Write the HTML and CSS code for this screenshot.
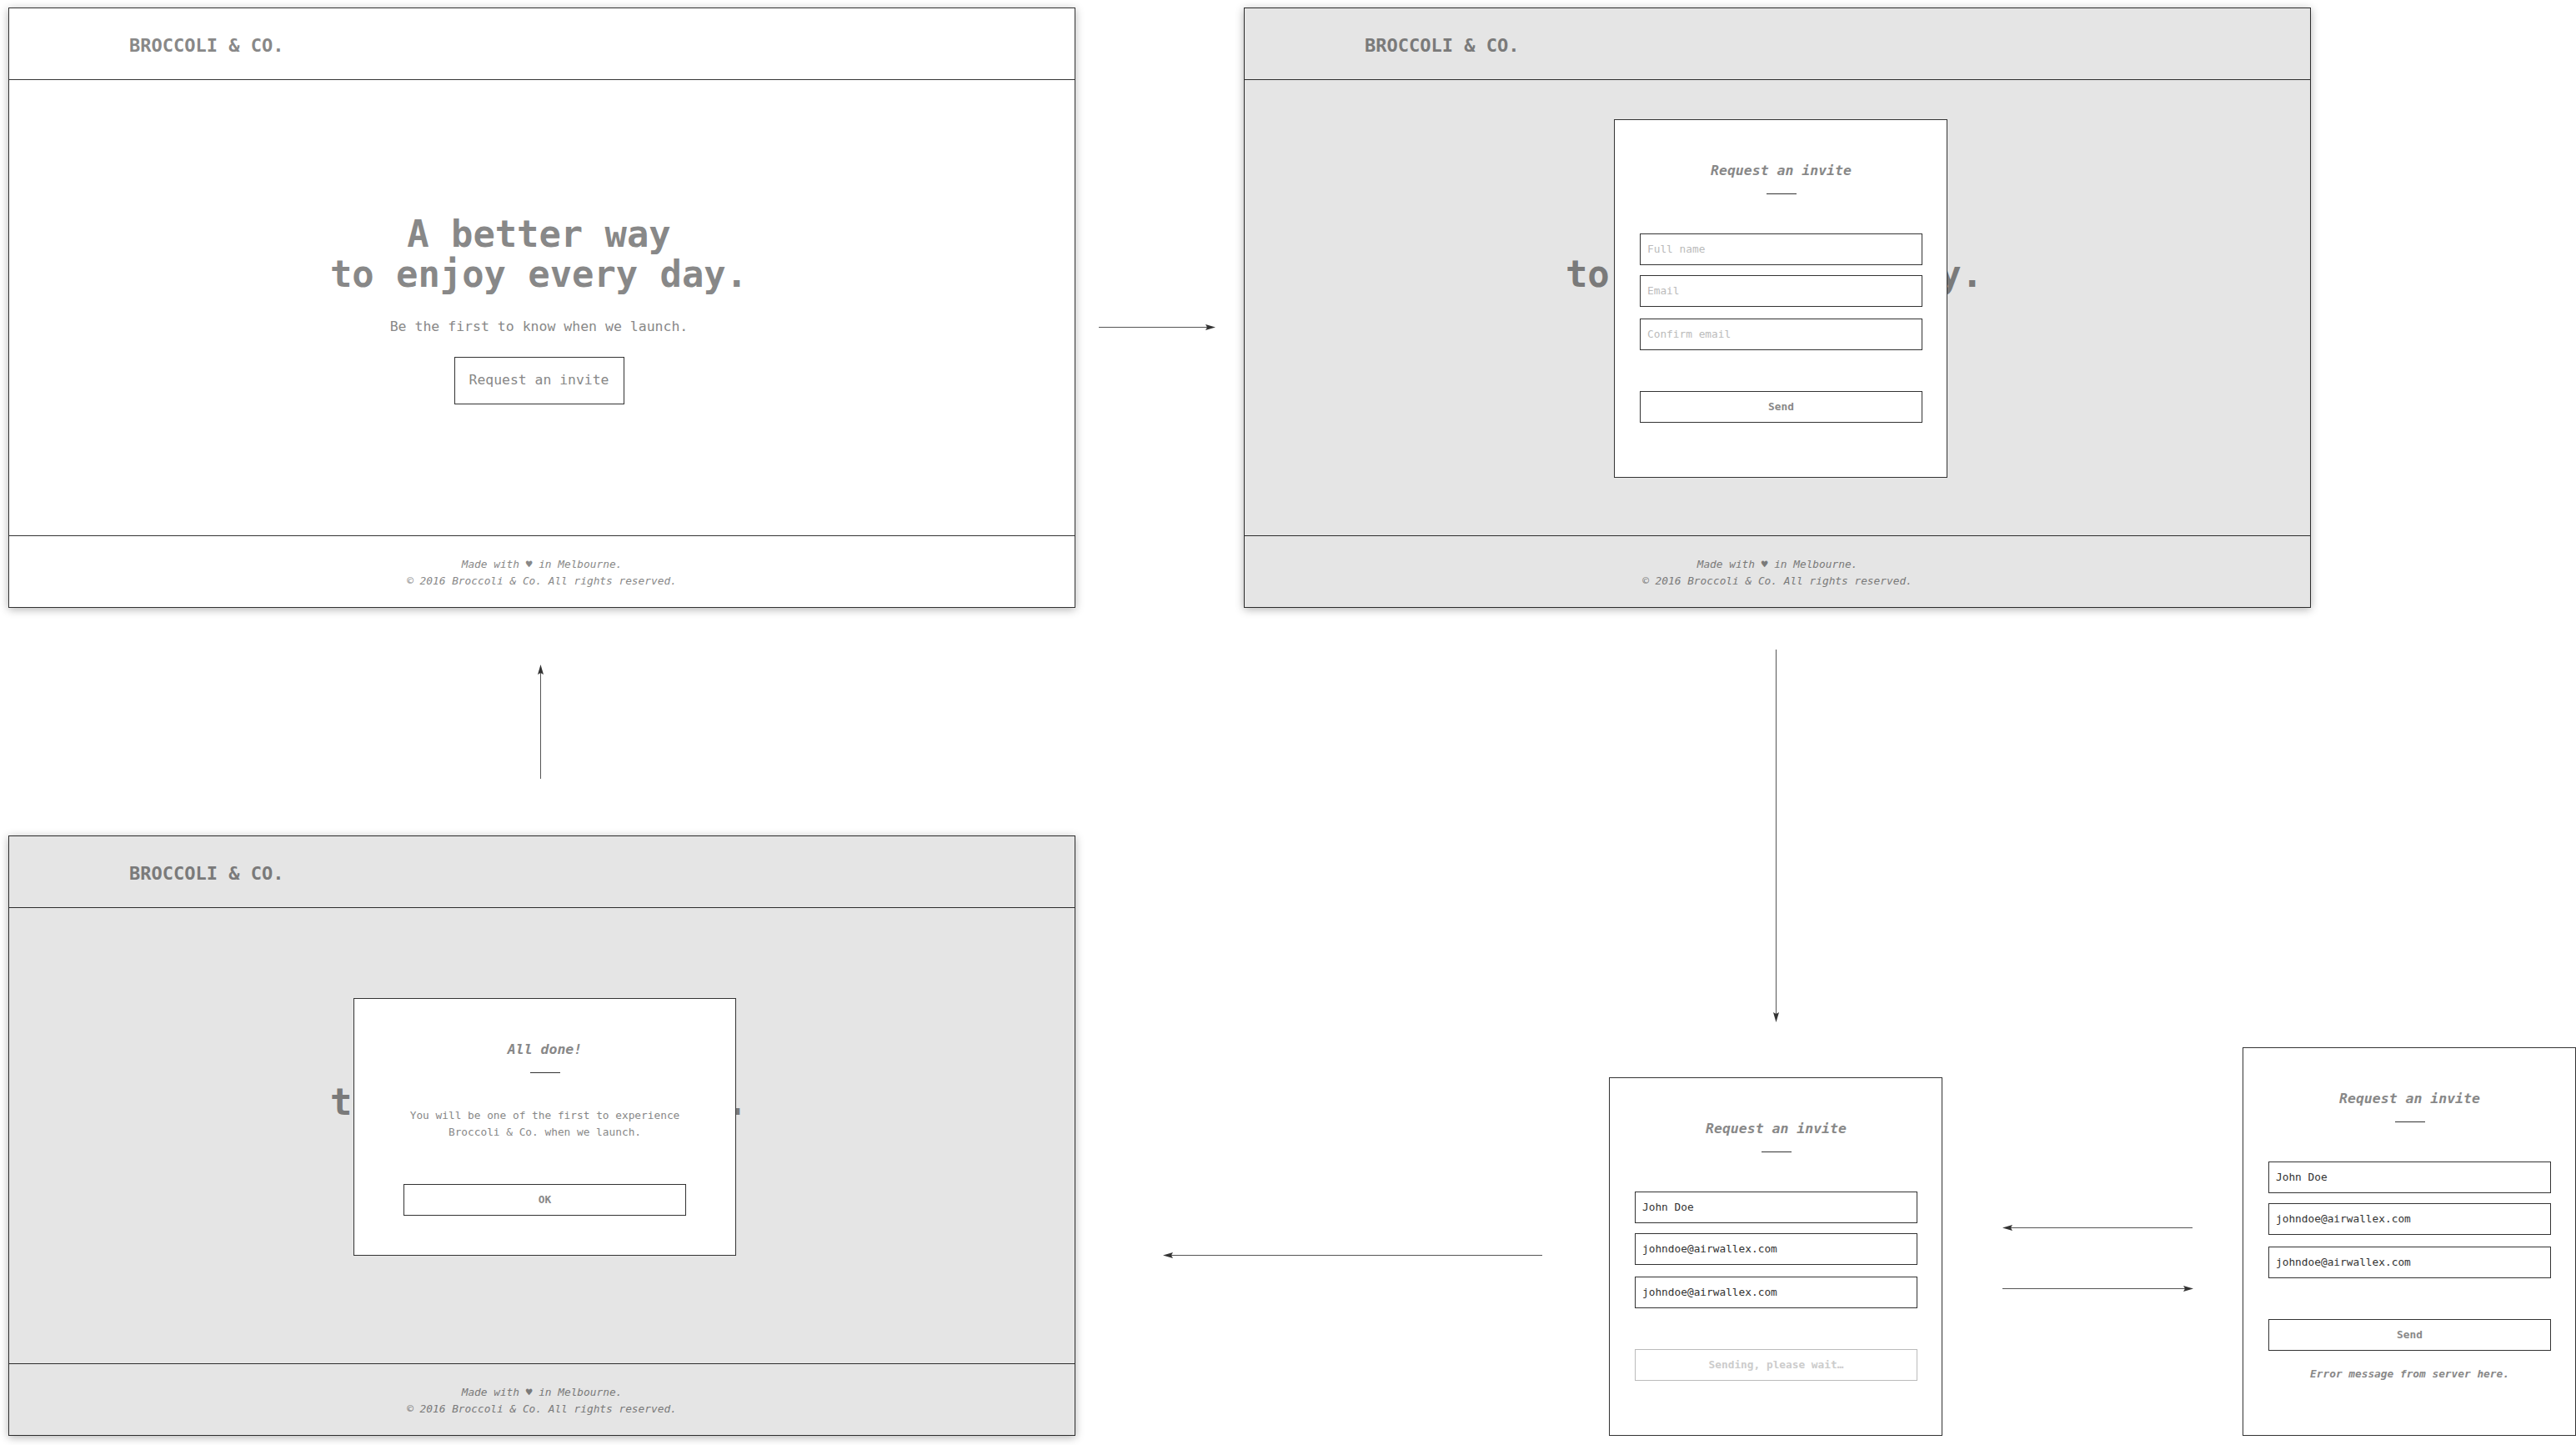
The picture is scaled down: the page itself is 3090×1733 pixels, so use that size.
FILE: index.html
```html
<!DOCTYPE html>
<html lang="en">
<head>
<meta charset="utf-8">
<title>Broccoli &amp; Co. user flow</title>
<link rel="stylesheet" href="styles.css">
</head>
<body>
<div class="canvas">

  <section class="frame frame-home">
    <header class="site-header"><span class="logo">BROCCOLI &amp; CO.</span></header>
    <main class="hero">
      <h1 class="hero-title">A better way<br>to enjoy every day.</h1>
      <p class="hero-sub">Be the first to know when we launch.</p>
      <button class="cta" type="button">Request an invite</button>
    </main>
    <footer class="site-footer">
      <div>Made with ♥ in Melbourne.</div>
      <div>© 2016 Broccoli &amp; Co. All rights reserved.</div>
    </footer>
  </section>

  <section class="frame frame-request">
    <header class="site-header"><span class="logo">BROCCOLI &amp; CO.</span></header>
    <main class="hero">
      <h1 class="hero-title">A better way<br>to enjoy every day.</h1>
      <p class="hero-sub">Be the first to know when we launch.</p>
      <button class="cta" type="button">Request an invite</button>
    </main>
    <footer class="site-footer">
      <div>Made with ♥ in Melbourne.</div>
      <div>© 2016 Broccoli &amp; Co. All rights reserved.</div>
    </footer>
    <div class="overlay"></div>
    <form class="panel panel-modal-request">
      <h2 class="panel-title">Request an invite</h2>
      <div class="panel-rule"></div>
      <input class="field field-name" type="text" placeholder="Full name">
      <input class="field field-email" type="text" placeholder="Email">
      <input class="field field-confirm" type="text" placeholder="Confirm email">
      <button class="action" type="button">Send</button>
    </form>
  </section>

  <section class="frame frame-done">
    <header class="site-header"><span class="logo">BROCCOLI &amp; CO.</span></header>
    <main class="hero">
      <h1 class="hero-title">A better way<br>to enjoy every day.</h1>
      <p class="hero-sub">Be the first to know when we launch.</p>
      <button class="cta" type="button">Request an invite</button>
    </main>
    <footer class="site-footer">
      <div>Made with ♥ in Melbourne.</div>
      <div>© 2016 Broccoli &amp; Co. All rights reserved.</div>
    </footer>
    <div class="overlay"></div>
    <div class="panel panel-done">
      <h2 class="panel-title">All done!</h2>
      <div class="panel-rule"></div>
      <p class="panel-text">You will be one of the first to experience<br>Broccoli &amp; Co. when we launch.</p>
      <button class="action action-ok" type="button">OK</button>
    </div>
  </section>

  <form class="panel panel-sending">
    <h2 class="panel-title">Request an invite</h2>
    <div class="panel-rule"></div>
    <input class="field field-name" type="text" value="John Doe">
    <input class="field field-email" type="text" value="johndoe@airwallex.com">
    <input class="field field-confirm" type="text" value="johndoe@airwallex.com">
    <button class="action action-disabled" type="button">Sending, please wait…</button>
  </form>

  <form class="panel panel-error">
    <h2 class="panel-title">Request an invite</h2>
    <div class="panel-rule"></div>
    <input class="field field-name" type="text" value="John Doe">
    <input class="field field-email" type="text" value="johndoe@airwallex.com">
    <input class="field field-confirm" type="text" value="johndoe@airwallex.com">
    <button class="action" type="button">Send</button>
    <p class="panel-error-text">Error message from server here.</p>
  </form>

  <svg class="arrows" width="3090" height="1733" viewBox="0 0 3090 1733" aria-hidden="true">
    <g class="arrow-line">
      <path d="M1318 392.5H1450"/>
      <path d="M2130.5 779V1218"/>
      <path d="M1850 1505.5H1403"/>
      <path d="M648.5 934V805"/>
      <path d="M2630 1472.5H2410"/>
      <path d="M2402 1545.5H2622"/>
    </g>
    <g class="arrow-head">
      <path d="M1458 392.5L1446 389L1448 392.5L1446 396Z"/>
      <path d="M2130.5 1226L2127 1214L2130.5 1216L2134 1214Z"/>
      <path d="M1395 1505.5L1407 1502L1405 1505.5L1407 1509Z"/>
      <path d="M648.5 797L645 809L648.5 807L652 809Z"/>
      <path d="M2402 1472.5L2414 1469L2412 1472.5L2414 1476Z"/>
      <path d="M2631 1545.5L2619 1542L2621 1545.5L2619 1549Z"/>
    </g>
  </svg>

</div>
</body>
</html>
```

FILE: styles.css
```css
* {
  box-sizing: border-box;
}

html,
body {
  margin: 0;
  padding: 0;
  background: #fff;
}

body {
  font-family: "DejaVu Sans Mono", "Liberation Mono", monospace;
  color: #888;
}

.canvas {
  position: relative;
  width: 3090px;
  height: 1733px;
  overflow: hidden;
}

/* Screens placed on the free canvas of the flow diagram */
.frame {
  position: absolute;
  width: 1280px;
  height: 720px;
  display: flex;
  flex-direction: column;
  background: #fff;
  border: 1px solid #333;
  box-shadow: 0 2px 10px rgba(0, 0, 0, 0.3);
}

.frame-home {
  left: 10px;
  top: 9px;
}

.frame-request {
  left: 1492px;
  top: 9px;
}

.frame-done {
  left: 10px;
  top: 1002px;
}

.site-header {
  height: 86px;
  flex: none;
  display: flex;
  align-items: center;
  padding: 3px 0 0 144px;
  border-bottom: 1px solid #333;
}

.logo {
  font-size: 22px;
  font-weight: 700;
}

.hero {
  flex: 1;
  display: flex;
  flex-direction: column;
  align-items: center;
  padding: 161px 7px 0 0;
}

.hero-title {
  margin: 0;
  font-size: 43.8px;
  line-height: 48px;
  font-weight: 700;
  text-align: center;
  white-space: nowrap;
}

.hero-sub {
  margin: 27px 0 0;
  font-size: 16.5px;
  line-height: 24px;
}

.cta {
  width: 204px;
  height: 57px;
  margin-top: 24px;
  padding: 0 0 2px;
  font: inherit;
  font-size: 16.4px;
  color: #888;
  background: #fff;
  border: 1px solid #333;
}

.site-footer {
  height: 86px;
  flex: none;
  padding-top: 24px;
  border-top: 1px solid #333;
  font-size: 12.8px;
  line-height: 20px;
  font-style: italic;
  text-align: center;
}

.overlay {
  position: absolute;
  inset: -1px;
  background: rgba(0, 0, 0, 0.1);
}

.panel {
  position: absolute;
  width: 400px;
  height: 430px;
  display: flex;
  flex-direction: column;
  padding: 49px 29px 0 30px;
  background: #fff;
  border: 1px solid #333;
}

.panel-modal-request {
  left: 443px;
  top: 133px;
}

.panel-done {
  left: 413px;
  top: 194px;
  width: 459px;
  height: 309px;
  padding-left: 59px;
  padding-right: 59px;
}

.panel-sending {
  left: 1930px;
  top: 1292px;
}

.panel-error {
  left: 2690px;
  top: 1256px;
  height: 466px;
}

.panel-title {
  margin: 0;
  font-size: 16.5px;
  line-height: 24px;
  font-weight: 700;
  font-style: italic;
  text-align: center;
}

.panel-rule {
  width: 36px;
  height: 1px;
  flex: none;
  margin: 15px auto 0;
  background: #333;
}

.panel-text {
  margin: 41px 0 0;
  font-size: 12.8px;
  line-height: 20px;
  text-align: center;
  white-space: nowrap;
}

.field {
  display: block;
  width: 100%;
  height: 38px;
  flex: none;
  padding: 0 8px 2px;
  font-family: inherit;
  font-size: 12.8px;
  color: #333;
  background: #fff;
  border: 1px solid #333;
  border-radius: 0;
  outline: none;
}

.field::placeholder {
  color: #bbb;
  opacity: 1;
}

.field-name {
  margin-top: 47px;
}

.field-email {
  margin-top: 12px;
}

.field-confirm {
  margin-top: 14px;
}

.action {
  width: 100%;
  height: 38px;
  flex: none;
  margin-top: 49px;
  padding: 0 0 2px;
  font-family: inherit;
  font-size: 12.8px;
  font-weight: 700;
  color: #888;
  background: #fff;
  border: 1px solid #333;
}

.action-ok {
  margin-top: 52px;
}

.action-disabled {
  color: #ccc;
  border-color: #bbb;
}

.panel-error-text {
  margin: 18px 0 0;
  font-size: 12.8px;
  line-height: 20px;
  font-weight: 700;
  font-style: italic;
  text-align: center;
}

.arrows {
  position: absolute;
  left: 0;
  top: 0;
  pointer-events: none;
}

.arrow-line path {
  fill: none;
  stroke: #555;
  stroke-width: 1;
}

.arrow-head path {
  fill: #333;
}
```
